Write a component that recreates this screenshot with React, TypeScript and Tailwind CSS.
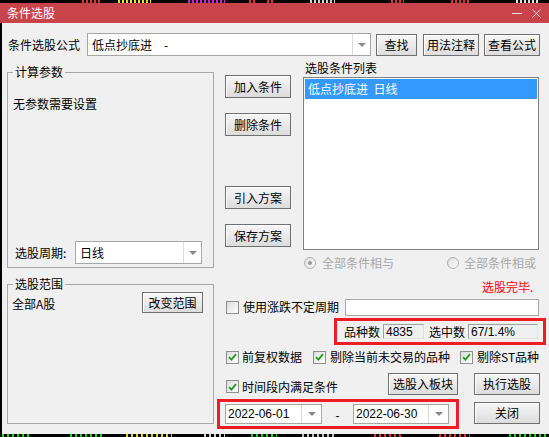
import React from "react";

const topFrags: { l: number; w: number; c: string }[] = [
  { l: 82, w: 20, c: "#e03030" },
  { l: 118, w: 33, c: "#e8e020" },
  { l: 188, w: 37, c: "#d020d0" },
  { l: 249, w: 7, c: "#e03030" },
  { l: 267, w: 7, c: "#e03030" },
  { l: 310, w: 25, c: "#d0d0d0" },
  { l: 391, w: 13, c: "#e03030" },
  { l: 451, w: 19, c: "#e03030" },
  { l: 516, w: 24, c: "#e0e0e0" },
];

const botFrags: { l: number; w: number; c: string }[] = [
  { l: 2, w: 30, c: "#20d020" },
  { l: 70, w: 32, c: "#20d020" },
  { l: 126, w: 46, c: "#d8d020" },
  { l: 204, w: 21, c: "#d0d0d0" },
  { l: 251, w: 26, c: "#20d020" },
  { l: 302, w: 35, c: "#c0c0c0" },
  { l: 374, w: 30, c: "#e03030" },
  { l: 439, w: 31, c: "#e03030" },
  { l: 509, w: 38, c: "#20d020" },
];

function Btn({ cls, children }: { cls: string; children: React.ReactNode }) {
  return (
    <div
      className={
        "flex items-center justify-center border border-[#707070] bg-linear-to-b from-[#f7f7f7] to-[#dcdcdc] shadow-[inset_1px_1px_0_#ffffff] text-[12px] leading-none text-black shrink-0 " +
        cls
      }
    >
      {children}
    </div>
  );
}

function Arrow({ cls }: { cls: string }) {
  return (
    <div className={"flex items-center justify-center border-l border-[#dcdcdc] bg-white " + cls}>
      <svg width="8" height="4" viewBox="0 0 8 4">
        <path d="M0 0H8L4 4Z" fill="#8a8a8a" />
      </svg>
    </div>
  );
}

function Check({ checked }: { checked?: boolean }) {
  return (
    <div className="w-[13px] h-[13px] shrink-0 border border-[#8f8f8f] bg-linear-to-br from-[#dcdcdc] to-[#ffffff] flex items-center justify-center">
      {checked && (
        <svg width="9" height="8" viewBox="0 0 9 8">
          <path d="M1 4.2 L3.4 6.6 L8 1.2" stroke="#1f9e1f" strokeWidth="1.8" fill="none" />
        </svg>
      )}
    </div>
  );
}

function Radio({ dot }: { dot?: boolean }) {
  return (
    <div className="w-[12px] h-[12px] shrink-0 rounded-full border border-[#b0b0b0] bg-linear-to-br from-[#e0e0e0] to-[#fafafa] flex items-center justify-center">
      {dot && <div className="w-[4px] h-[4px] rounded-full bg-[#9a9a9a]" />}
    </div>
  );
}

export default function App() {
  return (
    <div className="w-[549px] h-[437px] bg-black flex flex-col overflow-hidden text-[12px] text-black font-['Noto_Sans_CJK_SC','Noto_Sans',sans-serif]">
      {/* chart strip top */}
      <div className="relative h-[3px] shrink-0">
        {topFrags.map((f, i) => (
          <span
            key={i}
            className="absolute top-0 h-[3px]"
            style={{ left: f.l, width: f.w, background: `repeating-linear-gradient(90deg, ${f.c} 0 2px, transparent 2px 4px)` }}
          />
        ))}
      </div>

      {/* title bar */}
      <div className="h-[20px] shrink-0 bg-[#c9434a] flex items-center pl-[7px] text-white text-[12px] leading-none">
        <span>条件选股</span>
        <div className="ml-auto flex items-center pr-[8px]">
          <svg width="10" height="10" viewBox="0 0 10 10">
            <path d="M0 5.5H10" stroke="#f6dede" strokeWidth="1" />
          </svg>
          <svg width="9" height="9" viewBox="0 0 9 9" className="ml-[10px]">
            <path d="M0.5 0.5L8.5 8.5M8.5 0.5L0.5 8.5" stroke="#f6dede" strokeWidth="1" />
          </svg>
        </div>
      </div>

      {/* body */}
      <div className="h-[411px] shrink-0 bg-[#f0f0f0] border-l-2 border-black flex flex-col">
        {/* row 1 */}
        <div className="mt-[10px] h-[23px] flex items-center">
          <span className="ml-[6px] w-[79px] leading-none">条件选股公式</span>
          <div className="w-[284px] h-[23px] flex border border-[#a6a6a6] bg-white">
            <div className="flex-1 flex items-center pl-[4px] leading-none">
              <span>低点抄底进</span>
              <span className="ml-[12px]">-</span>
            </div>
            <Arrow cls="w-[18px]" />
          </div>
          <Btn cls="ml-[5px] w-[41px] h-[22px]">查找</Btn>
          <Btn cls="ml-[6px] w-[56px] h-[22px]">用法注释</Btn>
          <Btn cls="ml-[5px] w-[56px] h-[22px]">查看公式</Btn>
        </div>

        {/* main */}
        <div className="h-[378px] flex">
          {/* left column */}
          <div className="ml-[5px] w-[207px] flex flex-col">
            <div className="relative mt-[16px] h-[196px] border border-[#a8a8a8] flex flex-col">
              <span className="absolute left-[5px] top-[-9px] h-[16px] leading-[16px] px-[2px] bg-[#f0f0f0]">计算参数</span>
              <div className="mt-[23px] pl-[5px] h-[16px] leading-[16px]">无参数需要设置</div>
              <div className="mt-auto mb-[3px] flex items-center pl-[7px]">
                <span className="w-[60px] leading-none">选股周期:</span>
                <div className="w-[127px] h-[23px] flex border border-[#a6a6a6] bg-white">
                  <div className="flex-1 flex items-center pl-[4px] leading-none">日线</div>
                  <Arrow cls="w-[18px]" />
                </div>
              </div>
            </div>
            <div className="relative mt-[16px] h-[140px] border border-[#a8a8a8] flex flex-col">
              <span className="absolute left-[5px] top-[-9px] h-[16px] leading-[16px] px-[2px] bg-[#f0f0f0]">选股范围</span>
              <div className="mt-[7px] flex items-start pl-[4px] pr-[10px]">
                <span className="mt-[4px] leading-[16px]">全部A股</span>
                <Btn cls="ml-auto w-[61px] h-[21px]">改变范围</Btn>
              </div>
            </div>
          </div>

          {/* right area */}
          <div className="flex-1 flex flex-col">
            {/* buttons + list */}
            <div className="h-[194px] flex">
              <div className="ml-[11px] w-[66px] flex flex-col pt-[19px]">
                <Btn cls="w-[66px] h-[23px]">加入条件</Btn>
                <Btn cls="mt-[15px] w-[66px] h-[23px]">删除条件</Btn>
                <Btn cls="mt-[50px] w-[66px] h-[23px]">引入方案</Btn>
                <Btn cls="mt-[15px] w-[66px] h-[23px]">保存方案</Btn>
              </div>
              <div className="ml-[12px] w-[236px] flex flex-col pt-[4px]">
                <div className="h-[16px] leading-[16px] pl-[2px]">选股条件列表</div>
                <div className="mt-[1px] h-[173px] border border-[#828282] bg-white p-[1px]">
                  <div className="h-[20px] bg-[#3399ff] text-white flex items-center pl-[3px] leading-none">
                    低点抄底进&nbsp;&nbsp;日线
                  </div>
                </div>
              </div>
            </div>

            {/* radios */}
            <div className="h-[26px] flex items-center text-[#a8a8a8]">
              <div className="ml-[90px] w-[143px] flex items-center">
                <Radio dot />
                <span className="ml-[6px] leading-none">全部条件相与</span>
              </div>
              <div className="flex items-center">
                <Radio />
                <span className="ml-[5px] leading-none">全部条件相或</span>
              </div>
            </div>

            {/* status */}
            <div className="h-[22px] flex items-center">
              <span className="ml-[268px] text-[#ff0000] leading-none">选股完毕.</span>
            </div>

            {/* 使用涨跌不定周期 */}
            <div className="h-[18px] flex items-center">
              <div className="ml-[12px]">
                <Check />
              </div>
              <span className="ml-[4px] w-[102px] leading-none">使用涨跌不定周期</span>
              <div className="w-[194px] h-[17px] bg-white border border-[#a9a9a9]" />
            </div>

            {/* red box 1 */}
            <div className="mt-[2px] ml-[120px] w-[212px] h-[27px] border-[3px] border-[#ee1d24] flex items-center pl-[7px]">
              <span className="w-[36px] leading-none">品种数</span>
              <div className="ml-[3px] w-[41px] h-[15px] border border-t-[#a0a0a0] border-l-[#a0a0a0] border-b-[#e0e0e0] border-r-[#e0e0e0] bg-[#f0f0f0] flex items-center pl-[2px] font-['Liberation_Sans',sans-serif] leading-none">
                4835
              </div>
              <span className="ml-[5px] w-[36px] leading-none">选中数</span>
              <div className="ml-[3px] w-[70px] h-[15px] border border-t-[#a0a0a0] border-l-[#a0a0a0] border-b-[#e0e0e0] border-r-[#e0e0e0] bg-[#f0f0f0] flex items-center pl-[2px] font-['Liberation_Sans',sans-serif] leading-none">
                67/1.4%
              </div>
            </div>

            {/* checkbox row */}
            <div className="h-[24px] flex items-center">
              <div className="ml-[12px] w-[87px] flex items-center">
                <Check checked />
                <span className="ml-[3px] leading-none">前复权数据</span>
              </div>
              <div className="w-[147px] flex items-center">
                <Check checked />
                <span className="ml-[4px] leading-none">剔除当前未交易的品种</span>
              </div>
              <div className="flex items-center">
                <Check checked />
                <span className="ml-[4px] leading-none">剔除ST品种</span>
              </div>
            </div>

            {/* 时间段 row */}
            <div className="h-[30px] flex items-center">
              <div className="ml-[12px] w-[162px] flex items-center mt-[5px]">
                <Check checked />
                <span className="ml-[3px] leading-none">时间段内满足条件</span>
              </div>
              <Btn cls="w-[70px] h-[22px]">选股入板块</Btn>
              <Btn cls="ml-[16px] w-[66px] h-[22px]">执行选股</Btn>
            </div>

            {/* date row */}
            <div className="h-[30px] flex items-start">
              <div className="ml-[3px] w-[242px] h-[30px] border-[3px] border-[#ee1d24] flex items-center pl-[5px] font-['Liberation_Sans',sans-serif]">
                <div className="w-[97px] h-[20px] flex border border-[#a6a6a6] bg-white">
                  <div className="flex-1 flex items-center pl-[2px] leading-none">2022-06-01</div>
                  <Arrow cls="w-[20px]" />
                </div>
                <div className="w-[31px] flex items-center justify-center leading-none mt-[4px]">-</div>
                <div className="w-[96px] h-[20px] flex border border-[#a6a6a6] bg-white">
                  <div className="flex-1 flex items-center pl-[2px] leading-none">2022-06-30</div>
                  <Arrow cls="w-[20px]" />
                </div>
              </div>
              <Btn cls="mt-[3px] ml-[15px] w-[66px] h-[22px]">关闭</Btn>
            </div>
          </div>
        </div>
      </div>

      {/* chart strip bottom */}
      <div className="relative h-[3px] shrink-0">
        {botFrags.map((f, i) => (
          <span
            key={i}
            className="absolute top-0 h-[3px]"
            style={{ left: f.l, width: f.w, background: `repeating-linear-gradient(90deg, ${f.c} 0 2px, transparent 2px 5px)` }}
          />
        ))}
      </div>
    </div>
  );
}
